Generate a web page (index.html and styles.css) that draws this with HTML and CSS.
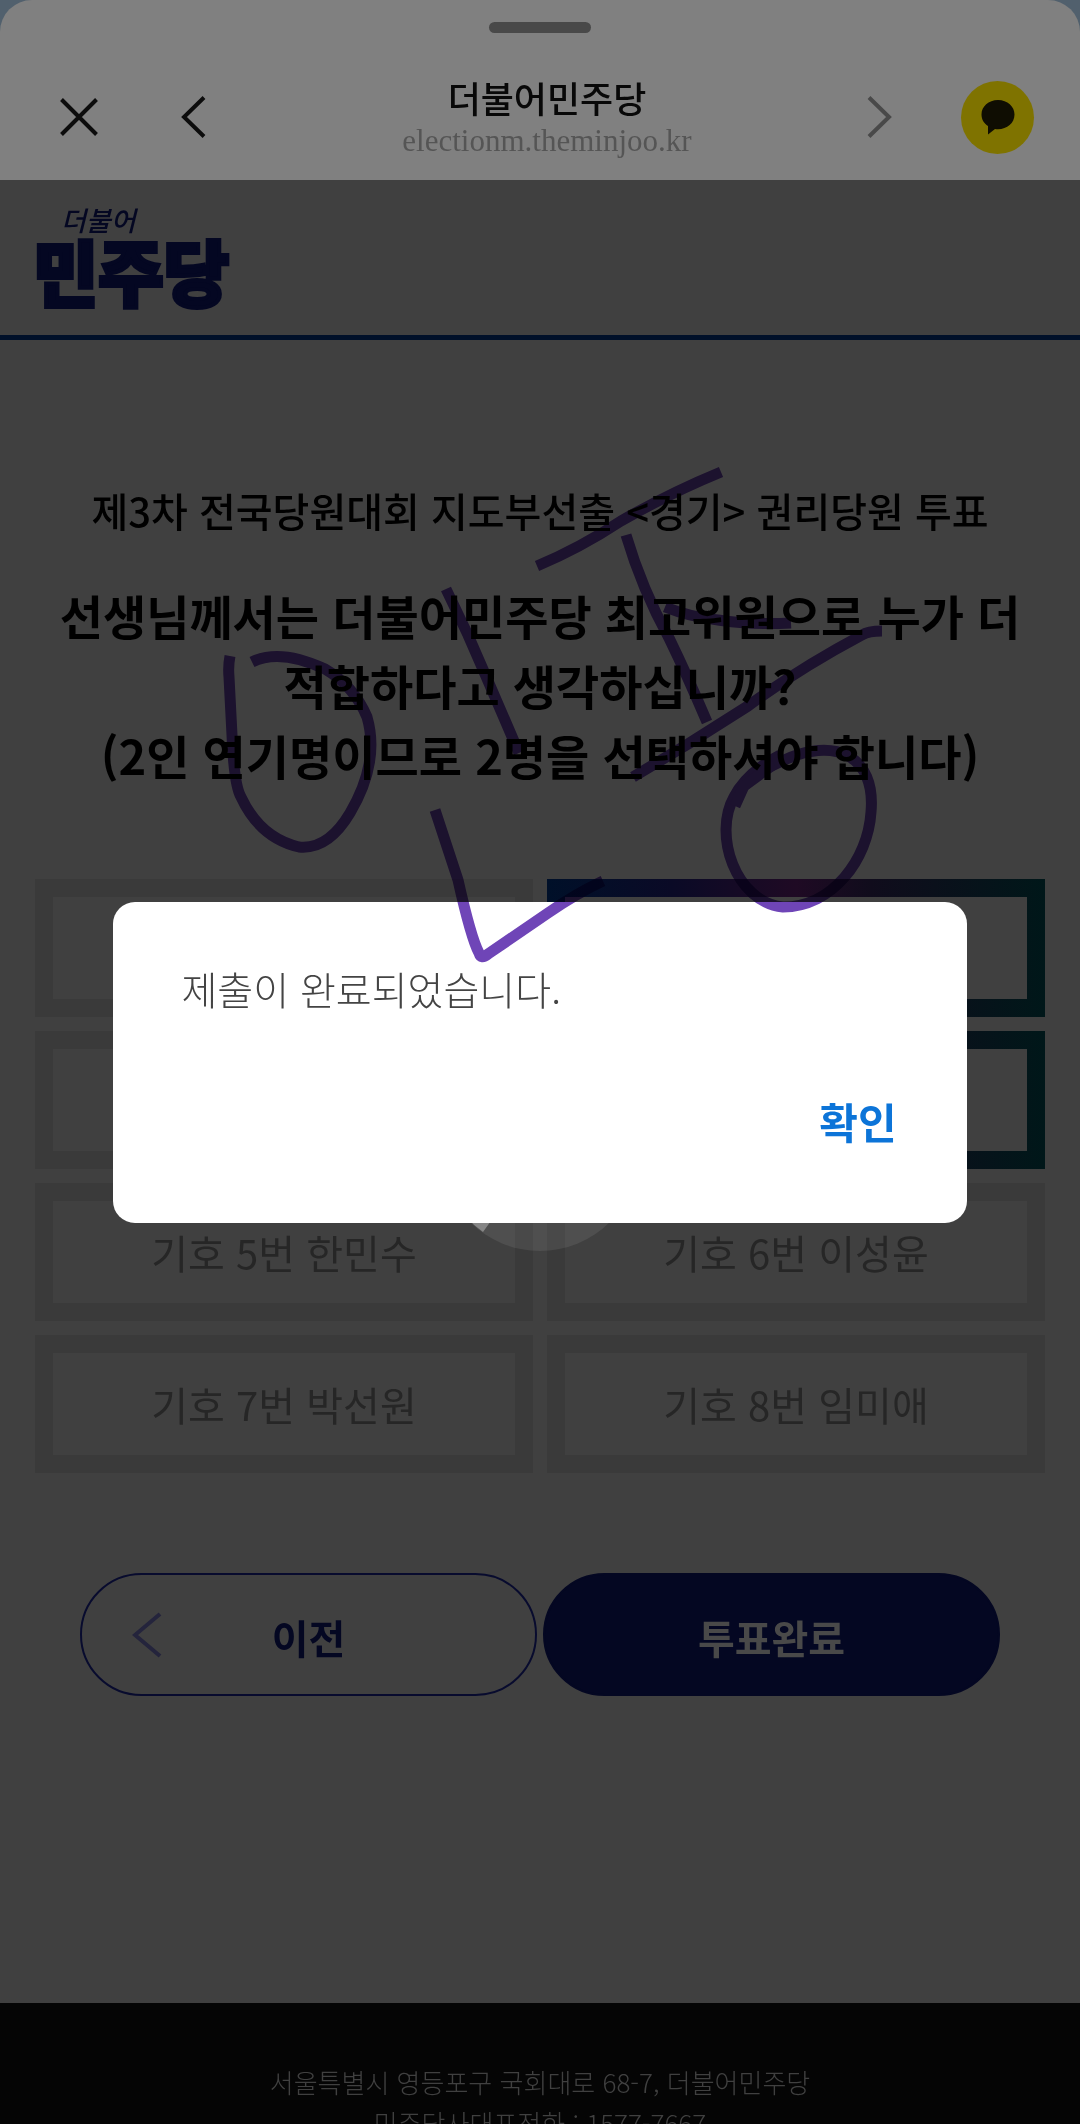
FILE: index.html
```html
<!DOCTYPE html>
<html lang="ko">
<head>
<meta charset="utf-8">
<meta name="viewport" content="width=device-width, initial-scale=1">
<title>더불어민주당</title>
<link rel="stylesheet" href="styles.css">
</head>
<body>
<div class="app">
  <header class="bar">
    <span class="handle"></span>
    <div class="bar-row">
      <div class="side">
        <button class="icon-btn" type="button" aria-label="닫기">
          <svg width="38" height="38" viewBox="0 0 38 38"><path d="M1.500 1.500L36.500 36.500M36.500 1.500L1.500 36.500" fill="none" stroke="#0c0c0c" stroke-width="4"/></svg>
        </button>
        <button class="icon-btn" type="button" aria-label="뒤로">
          <svg width="26" height="42" viewBox="0 0 26 42"><path d="M24 1.500L4 21L24 40.500" fill="none" stroke="#0c0c0c" stroke-width="4"/></svg>
        </button>
      </div>
      <div class="site">
        <h1 class="site-name">더불어민주당</h1>
        <p class="site-url">electionm.theminjoo.kr</p>
      </div>
      <div class="side side-end">
        <button class="icon-btn" type="button" aria-label="앞으로">
          <svg width="26" height="42" viewBox="0 0 26 42"><path d="M2 1.500L22 21L2 40.500" fill="none" stroke="#494949" stroke-width="4"/></svg>
        </button>
        <button class="talk" type="button" aria-label="공유">
          <svg width="34" height="36" viewBox="0 0 34 36"><path d="M17 1C7.500 1 .5 7.500 .5 15.500C.5 20.500 3 24.500 7 27L7 35.500L14 30C24.500 31.500 33.500 25 33.500 15.500C33.500 7.500 26.500 1 17 1Z" fill="#0f0d02"/></svg>
        </button>
      </div>
    </div>
  </header>

  <div class="webview">
    <div class="brand">
      <a class="logo" href="#"><span class="logo-small">더불어</span><span class="logo-big">민주당</span></a>
    </div>
    <main class="poll">
      <h2 class="poll-title">제3차 전국당원대회 지도부선출 &lt;경기&gt; 권리당원 투표</h2>
      <p class="question">선생님께서는 더불어민주당 최고위원으로 누가 더<br>적합하다고 생각하십니까?<br>(2인 연기명이므로 2명을 선택하셔야 합니다)</p>
      <div class="choices">
        <button class="choice" type="button"></button>
        <button class="choice selected" type="button"></button>
        <button class="choice" type="button"></button>
        <button class="choice selected" type="button"></button>
        <button class="choice" type="button">기호 5번 한민수</button>
        <button class="choice" type="button">기호 6번 이성윤</button>
        <button class="choice" type="button">기호 7번 박선원</button>
        <button class="choice" type="button">기호 8번 임미애</button>
      </div>
      <div class="actions">
        <button class="action prev" type="button">
          <svg class="prev-icon" width="30" height="46" viewBox="0 0 30 46"><path d="M28 2L3 23L28 44" fill="none" stroke="#24243c" stroke-width="4"/></svg>
          이전
        </button>
        <button class="action submit" type="button">투표완료</button>
      </div>
    </main>
    <footer class="footer">서울특별시 영등포구 국회대로 68-7, 더불어민주당<br>민주당사대표전화 : 1577-7667</footer>
    <div class="loading">
      <svg width="198" height="198" viewBox="0 0 198 198"><circle cx="99" cy="99" r="99" fill="#fff" fill-opacity=".08"/><path d="M42 179A99 99 0 0 1 0 99L14 99A85 85 0 0 0 52 165Z" fill="#868686"/></svg>
    </div>
  </div>
</div>

<div class="overlay">
  <div class="dialog" role="alertdialog" aria-labelledby="msg">
    <p class="message" id="msg">제출이 완료되었습니다.</p>
    <button class="confirm" type="button">확인</button>
  </div>
</div>

<svg class="ink" viewBox="0 0 1080 2124" preserveAspectRatio="xMidYMin slice" aria-hidden="true">
  <g fill="none" stroke="#6f45b7" stroke-width="11" stroke-linejoin="round">
    <path d="M230 656Q228 666 229 677L232 735Q234 785 241 797Q260 838 299 847Q328 850 350 813Q380 762 367 717Q354 686 325 669Q280 648 252 662"/>
    <path d="M446 589L468 635Q493 692 519 753"/>
    <path d="M435 810L458 880Q471 938 479 953Q481 960 488 954L548 913Q577 893 603 881"/>
    <path d="M537 566Q580 548 621 521Q670 493 721 472"/>
    <path d="M626 535Q642 589 669 638Q687 675 707 722"/>
    <path d="M665 607Q690 617 718 620Q750 625 791 623"/>
    <path d="M633 777L688 744L748 706Q800 668 862 635Q868 631 882 631"/>
    <path d="M733 803Q743 778 780 762C835 735 876 756 871 812C868 860 832 907 783 907C735 902 713 834 734 797Q746 773 780 755"/>
    <path d="M735 806L744 786L774 764"/>
  </g>
</svg>
</body>
</html>
```
FILE: styles.css
```css
* {
  box-sizing: border-box;
}

body {
  margin: 0;
  background: #51606d;
  color: #000;
  font-family: "Noto Sans CJK KR", sans-serif;
}

h1,
h2,
p {
  margin: 0;
}

button {
  padding: 0;
  border: 0;
  background: none;
  color: inherit;
  font: inherit;
}

svg {
  display: block;
}

.app {
  display: flex;
  flex-direction: column;
  height: 100vh;
  overflow: hidden;
}

.bar {
  flex: none;
  display: flex;
  flex-direction: column;
  height: 180px;
  padding-top: 22px;
  border-radius: 32px 32px 0 0;
  background: #808080;
}

.handle {
  align-self: center;
  width: 102px;
  height: 11px;
  border-radius: 6px;
  background: #494949;
}

.bar-row {
  display: grid;
  grid-template-columns: 1fr auto 1fr;
  align-items: center;
  height: 126px;
  margin-top: 22px;
  padding: 0 46px 0 60px;
}

.side {
  display: flex;
  align-items: center;
  gap: 82px;
}

.side-end {
  justify-content: flex-end;
  gap: 68px;
}

.site {
  padding-top: 4px;
  text-align: center;
}

.site-name {
  font-size: 36px;
  line-height: 44px;
  font-weight: 500;
  color: #080808;
}

.site-url {
  font-family: "Liberation Serif", serif;
  font-size: 31px;
  line-height: 44px;
  color: #555;
}

.talk {
  display: grid;
  place-items: center;
  width: 73px;
  height: 73px;
  border-radius: 50%;
  background: #7f7300;
}

.webview {
  position: relative;
  flex: 1;
  overflow: hidden;
  background: #404040;
}

.brand {
  height: 160px;
  padding: 24px 33px 0;
  border-bottom: 5px solid #001029;
}

.logo {
  display: inline-flex;
  flex-direction: column;
  color: #040722;
  text-decoration: none;
}

.logo-small {
  padding-left: 28px;
  font-size: 27px;
  line-height: 32px;
  font-style: italic;
  font-weight: 500;
}

.logo-big {
  font-size: 71px;
  line-height: 66px;
  font-weight: 900;
  -webkit-text-stroke: 4px #040722;
}

.poll {
  padding: 140px 35px 0;
  text-align: center;
}

.poll-title {
  font-size: 40px;
  line-height: 60px;
  font-weight: 500;
}

.question {
  margin-top: 40px;
  font-size: 47px;
  line-height: 70px;
  font-weight: 700;
}

.choices {
  display: grid;
  grid-template-columns: 1fr 1fr;
  grid-auto-rows: 138px;
  gap: 14px;
  margin-top: 89px;
}

.choice {
  border: 18px solid #3a3a3a;
  color: #262626;
  font-size: 40px;
}

.choice.selected {
  border-image: linear-gradient(90deg, #001029, #0a0a26 25%, #1f0a24 50%, #100c1c 65%, #001719) 18;
}

.actions {
  display: flex;
  justify-content: center;
  gap: 6px;
  margin: 100px 45px 0;
}

.action {
  position: relative;
  flex: 1;
  height: 123px;
  padding-top: 4px;
  border: 2px solid #080b2e;
  border-radius: 62px;
  font-size: 40px;
  font-weight: 700;
}

.prev {
  color: #040722;
}

.prev-icon {
  position: absolute;
  left: 50px;
  top: 37px;
}

.submit {
  border-color: #040722;
  background: #040722;
  color: #494949;
}

.footer {
  margin-top: 307px;
  padding: 58px 0 60px;
  background: #050505;
  color: #404040;
  font-size: 26px;
  line-height: 41px;
  font-weight: 300;
  text-align: center;
}

.loading {
  position: absolute;
  inset: 0;
  display: grid;
  place-items: center;
}

.overlay {
  position: absolute;
  inset: 0;
  display: grid;
  place-items: center;
}

.dialog {
  display: flex;
  flex-direction: column;
  align-items: flex-start;
  width: 79%;
  padding: 58px 70px 72px 68px;
  border-radius: 22px;
  background: #fff;
}

.message {
  color: #444;
  font-size: 39px;
  line-height: 56px;
  font-weight: 300;
}

.confirm {
  align-self: flex-end;
  margin-top: 75px;
  color: #0c74d8;
  font-size: 42px;
  line-height: 60px;
  font-weight: 700;
}

.ink {
  position: absolute;
  top: 0;
  left: 0;
  width: 100%;
  height: 100vh;
  mix-blend-mode: multiply;
  pointer-events: none;
}
```
